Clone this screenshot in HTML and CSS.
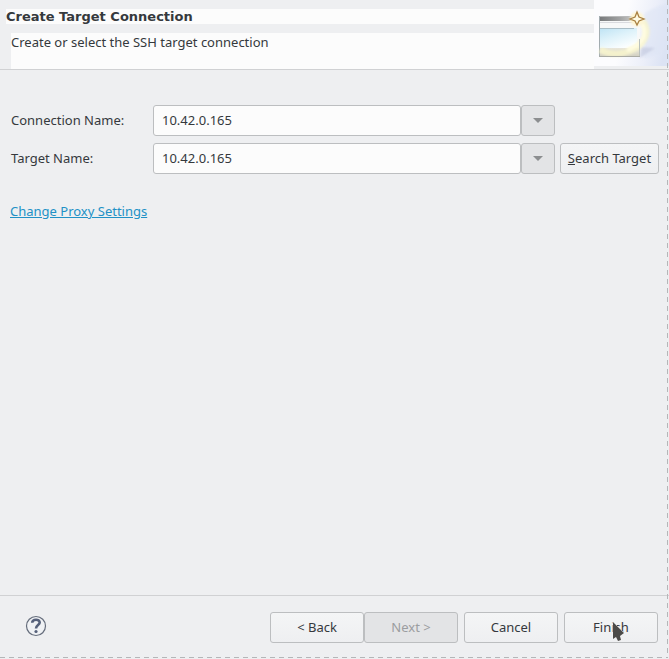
FILE: index.html
```html
<!DOCTYPE html>
<html lang="en">
<head>
<meta charset="utf-8">
<meta name="viewport" content="width=device-width, initial-scale=1">
<title>Create Target Connection</title>
<link rel="stylesheet" href="styles.css">
</head>
<body>
<form class="wizard">
  <header class="banner">
    <div class="banner-text">
      <h1>Create Target Connection</h1>
      <p>Create or select the SSH target connection</p>
    </div>
    <svg class="banner-art" viewBox="0 0 75 66" aria-hidden="true">
      <defs>
        <linearGradient id="sky" x1="0" y1="0.3" x2="1" y2="0.5"><stop offset="0.4" stop-color="#fcfcfe"/><stop offset="0.75" stop-color="#eceff9"/><stop offset="1" stop-color="#dce3f4"/></linearGradient>
        <linearGradient id="bar" x1="0" y1="0" x2="1" y2="0"><stop offset="0" stop-color="#77797b"/><stop offset="0.5" stop-color="#a0a1a2"/><stop offset="1" stop-color="#dddcd8"/></linearGradient>
        <linearGradient id="pane" x1="0" y1="0" x2="0.6" y2="1"><stop offset="0" stop-color="#bee3f4"/><stop offset="0.5" stop-color="#def2fa"/><stop offset="1" stop-color="#fbfeff"/></linearGradient>
        <linearGradient id="base" x1="0" y1="0" x2="0" y2="1"><stop offset="0" stop-color="#e8e6dc"/><stop offset="1" stop-color="#d3d1c2"/></linearGradient>
        <filter id="soft" x="-20%" y="-20%" width="140%" height="140%"><feGaussianBlur stdDeviation="1.2"/></filter>
      </defs>
      <rect width="75" height="66" fill="url(#sky)"/>
      <path d="M50 14C56 9 66 5 75 3V46C67 54 60 57 50 59Z" fill="#dee5f5" opacity=".6" filter="url(#soft)"/>
      <path d="M46 58L47 47L61 48Z" fill="#c4cae0" opacity=".7" filter="url(#soft)"/>
      <rect x="5" y="16" width="41" height="40" fill="#f7f8f8"/>
      <rect x="5" y="16" width="41" height="5" fill="url(#bar)"/>
      <path d="M5 16.500H44" stroke="#b8b9ba"/>
      <path d="M5 22.500H44" stroke="#d9dade"/>
      <rect x="6" y="28" width="37" height="20" fill="url(#pane)"/>
      <path d="M6 28.500H40" fill="none" stroke="#a9bdc6"/>
      <path d="M5.500 16V56" stroke="#a2acb0"/>
      <rect x="6" y="48" width="40" height="8" fill="url(#base)"/>
      <path d="M49 21C59 36 46 50 29 53C20 55 12 53 6 50" fill="none" stroke="#f9f6cd" stroke-width="6" opacity=".85" filter="url(#soft)"/>
      <path d="M48 24C55 36 46 46 33 50" fill="none" stroke="#fffce1" stroke-width="4" filter="url(#soft)"/>
      <path d="M5 56.500H46" stroke="#aaaba4"/>
      <path d="M45.500 39V56" stroke="#bac1bd"/>
      <circle cx="43" cy="19" r="7" fill="#fff5d0" filter="url(#soft)"/>
      <path d="M43 12L45 17L50 19L45 21L43 25L41 21L36 19L41 17Z" fill="#fffbe4" stroke="#a98042" stroke-width="1.300"/>
    </svg>
  </header>

  <main class="content">
    <div class="fields">
      <label for="connection">Connection Name:</label>
      <div class="combo">
        <input id="connection" type="text" value="10.42.0.165">
        <button type="button" aria-label="Show connections"><svg viewBox="0 0 10 5" aria-hidden="true"><path d="M0 0H10L5 5Z"/></svg></button>
      </div>
      <label class="next-row" for="target">Target Name:</label>
      <div class="combo">
        <input id="target" type="text" value="10.42.0.165">
        <button type="button" aria-label="Show targets"><svg viewBox="0 0 10 5" aria-hidden="true"><path d="M0 0H10L5 5Z"/></svg></button>
      </div>
      <button class="button" type="button"><u>S</u>earch Target</button>
    </div>
    <a class="proxy" href="#proxy">Change Proxy Settings</a>
  </main>

  <footer class="actions">
    <button class="help" type="button" aria-label="Help">
      <svg viewBox="0 0 22 22" aria-hidden="true"><circle cx="11" cy="11" r="9.500" fill="#f0f2f5" stroke="#656d7c" stroke-width="1.200"/><path d="M7.200 7.800C7.300 3.700 14.700 3.700 14.700 7.600C14.700 10.100 11 10.100 11 13.500" fill="none" stroke="#56617b" stroke-width="2.600"/><circle cx="11" cy="16.500" r="1.600" fill="#56617b"/></svg>
    </button>
    <div class="pair">
      <button class="button" type="button">&lt; Back</button>
      <button class="button" type="button" disabled>Next &gt;</button>
    </div>
    <button class="button" type="button">Cancel</button>
    <div class="finish">
      <button class="button" type="button">Finish</button>
      <svg class="pointer" viewBox="0 0 14 22" aria-hidden="true"><path d="M1 1V18L4 16L6 20L9 19L8 15L12 12Z" fill="#4b4a48" stroke="#f7f7f7" stroke-width="1" paint-order="stroke"/></svg>
    </div>
  </footer>
</form>
</body>
</html>
```
FILE: styles.css
```css
* {
  box-sizing: border-box;
}

body {
  margin: 0;
  background: #eeeff1;
  color: #35393d;
  font: 13px/18px "Noto Sans", sans-serif;
}

/* Dashed guides run along the right and bottom edges. */
.wizard {
  position: relative;
  display: flex;
  flex-direction: column;
  min-height: 100vh;
}

.wizard::before,
.wizard::after {
  content: "";
  position: absolute;
  right: 1px;
  bottom: 1px;
  pointer-events: none;
}

.wizard::before {
  z-index: 1;
  top: 0;
  width: 1px;
  background: repeating-linear-gradient(#b5b6b8 0 5px, transparent 5px 9px);
}

.wizard::after {
  left: 0;
  height: 1px;
  background: repeating-linear-gradient(90deg, #b5b6b8 0 5px, transparent 5px 9px);
}

.banner {
  display: flex;
  height: 70px;
  border-bottom: 1px solid #d0d1d3;
}

.banner-text {
  display: flex;
  flex: 1;
  flex-direction: column;
  gap: 9px;
  padding: 9px 0 0 6px;
}

h1,
p {
  margin: 0;
  background: #fcfcfc;
}

h1 {
  font: bold 13px/15px "DejaVu Sans", sans-serif;
}

p {
  flex: 1;
  margin-left: 5px;
}

.banner-art {
  width: 75px;
  height: 66px;
}

.content {
  flex: 1;
  padding: 35px 10px 20px;
}

.fields {
  display: grid;
  grid-template-columns: 137px 1fr 99px;
  align-items: center;
  gap: 7px 5px;
  padding-left: 1px;
}

label {
  padding-bottom: 2px;
}

.next-row {
  grid-column: 1;
}

.combo {
  display: flex;
}

.combo input {
  flex: 1;
  min-width: 0;
  height: 31px;
  padding: 0 8px 2px;
  border: 1px solid #bcbec0;
  border-radius: 3px;
  background: #fcfcfc;
  color: inherit;
  font: inherit;
}

.combo button {
  display: grid;
  place-items: center;
  width: 34px;
  padding: 0;
  border: 1px solid #bcbec0;
  border-radius: 3px;
  background: #e3e4e6;
}

.combo svg {
  width: 10px;
  height: 5px;
  fill: #8c8e90;
}

.button {
  height: 31px;
  padding: 0 0 2px;
  border: 1px solid #bcbec0;
  border-radius: 3px;
  background: linear-gradient(#f4f5f6, #eeeff1);
  color: inherit;
  font: inherit;
}

.button:disabled {
  background: #e3e4e6;
  color: #9b9da0;
}

.proxy {
  display: inline-block;
  margin-top: 28px;
  color: #2191c6;
}

.actions {
  display: flex;
  gap: 6px;
  padding: 16px 11px 16px 25px;
  border-top: 1px solid #d0d1d3;
}

.actions .button {
  width: 94px;
}

.help {
  width: 22px;
  height: 22px;
  margin: 3px auto 0 0;
  padding: 0;
  border: 0;
  background: none;
}

.help svg {
  display: block;
}

.pair {
  display: flex;
}

.finish {
  position: relative;
}

.pointer {
  position: absolute;
  top: 9px;
  left: 48px;
  width: 14px;
  height: 22px;
  pointer-events: none;
}
```
